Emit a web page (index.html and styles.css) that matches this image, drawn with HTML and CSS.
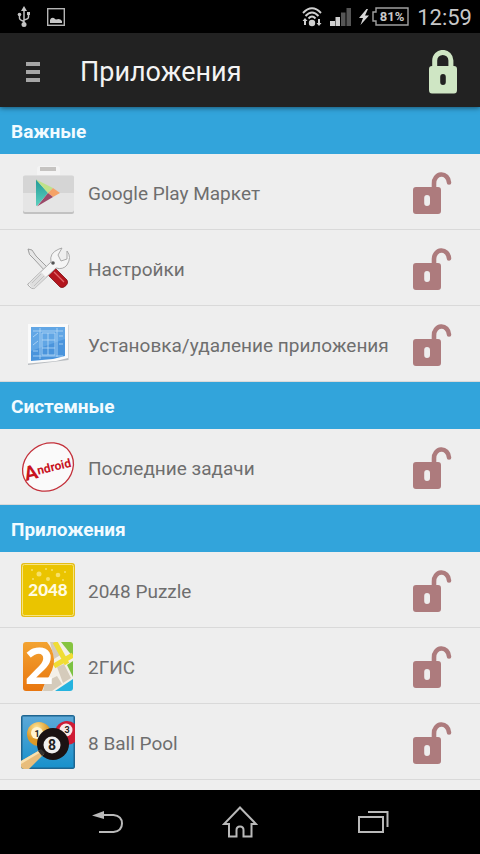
FILE: index.html
```html
<!DOCTYPE html>
<html lang="ru">
<head>
  <meta charset="UTF-8" />
  <meta name="viewport" content="width=device-width, initial-scale=1.0"/>
  <title>Приложения</title>
  <link rel="stylesheet" href="styles.css">
</head>
<body>
  <!-- Shared lock icon -->
  <svg class="sprite" aria-hidden="true">
    <symbol id="unlock" viewBox="0 0 40 44">
      <path d="M21 18V12.500A7.500 8.500 0 0 1 36 11.500" fill="none" stroke="currentColor" stroke-width="4.600" stroke-linecap="round"/>
      <path fill-rule="evenodd" fill="currentColor" d="M3 16H25Q28 16 28 19V40Q28 43 25 43H3Q0 43 0 40V19Q0 16 3 16ZM14 24Q11.200 24 11.200 27V32Q11.200 35 14 35Q17 35 17 32V27Q17 24 14 24Z"/>
    </symbol>
  </svg>

  <div class="screen">
    <div class="status-bar">
      <div class="status-group left">
        <svg width="14" height="22" viewBox="0 0 14 22" fill="none" stroke="#c4c4c4" stroke-width="1.500">
          <path d="M7 4V18M2.500 9V12Q2.500 14 7 15.500M11.500 8V11Q11.500 13 7 14"/>
          <path d="M7 0L10 5H4Z" fill="#c4c4c4" stroke="none"/>
          <circle cx="7" cy="18.500" r="2.500" fill="#c4c4c4" stroke="none"/>
          <circle cx="2.500" cy="8.500" r="1.800" fill="#c4c4c4" stroke="none"/>
          <path d="M10 6H13V9H10Z" fill="#c4c4c4" stroke="none"/>
        </svg>
        <svg width="18" height="18" viewBox="0 0 18 18">
          <rect x="0.700" y="0.700" width="16.600" height="16.600" fill="none" stroke="#b5b5b5" stroke-width="1.400"/>
          <path d="M3 15V12Q4 9 7 10Q8 11 9 11.500Q13 10 15 13V15Z" fill="#c8c8c8"/>
        </svg>
      </div>
      <div class="status-group">
        <svg class="wifi" width="20" height="20" viewBox="0 0 20 20" fill="none" stroke="#d0d0d0" stroke-width="1.900">
          <path d="M1 6Q10 -3.500 19 6M3.500 9Q10 2 16.500 9M6.500 11.500Q10 7.500 13.500 11.500"/>
          <circle cx="10" cy="16" r="3.200" fill="#d0d0d0" stroke="none"/>
          <path d="M3 11L5.500 14H4V18H2V14H0.500ZM17 19L14.500 16H16V12H18V16H19.500Z" fill="#d0d0d0" stroke="none"/>
        </svg>
        <svg class="signal" width="21" height="18" viewBox="0 0 21 18">
          <path d="M0 13H5V18H0ZM5.500 9H10V18H5.500Z" fill="#d0d0d0"/>
          <path d="M11 4.500H15.500V18H11ZM16.500 0H21V18H16.500Z" fill="#555"/>
        </svg>
        <svg class="bolt" width="10" height="16" viewBox="0 0 10 16">
          <path d="M7.500 0L0 9H4L1.500 16L10 6.500H6L9 0Z" fill="#d8d8d8"/>
        </svg>
        <svg class="battery" width="37" height="19" viewBox="0 0 37 19">
          <path d="M4 1H36V18H4V14H1V5H4Z" fill="none" stroke="#a0a0a0" stroke-width="1.400"/>
          <text x="20" y="14">81%</text>
        </svg>
        <span class="clock">12:59</span>
      </div>
    </div>

    <header class="action-bar">
      <button class="menu-button" aria-label="Меню"><span></span><span></span><span></span></button>
      <h1>Приложения</h1>
      <button class="lock-all" aria-label="Заблокировать">
        <svg width="30" height="44" viewBox="0 0 30 44">
          <path d="M6.700 18V10.500A8.100 8.100 0 0 1 22.900 10.500V18" fill="none" stroke="#cfe6c4" stroke-width="5"/>
          <path fill-rule="evenodd" fill="#cfe6c4" d="M4 16H26Q29 16 29 19V40Q29 43.500 26 43.500H4Q1 43.500 1 40V19Q1 16 4 16ZM15 24Q12.200 24 12.200 27V32Q12.200 35 15 35Q17.800 35 17.800 32V27Q17.800 24 15 24Z"/>
        </svg>
      </button>
    </header>

    <main class="app-list">
      <h2>Важные</h2>
      <ul>
        <li>
          <svg class="app-icon" viewBox="0 0 54 54">
            <defs>
              <linearGradient id="play" x1="0" y1="0" x2="0" y2="1"><stop offset="0" stop-color="#219a96"/><stop offset="1" stop-color="#5ed0bf"/></linearGradient>
            </defs>
            <path d="M16 11V4Q16 1 19 1H36Q39 1 39 4V11Z" fill="#f4f4f4"/>
            <rect x="19" y="2" width="16" height="4" fill="#c5c3c1"/>
            <rect x="2" y="12" width="51" height="37" rx="2" fill="#c2c2c2"/>
            <rect x="2" y="10.500" width="51" height="36.500" rx="2" fill="#e5e5e5"/>
            <path d="M2 28V12Q2 10.500 4 10.500H51Q53 10.500 53 12V28Z" fill="#d5d5d5"/>
            <path d="M15 14.500L27 28L16 41Q15 41 15 40Z" fill="url(#play)"/>
            <path d="M15 14.500L32 23L27 28Z" fill="#bfe18a"/>
            <path d="M32 23L39 28L32 32L27 28Z" fill="#f5a267"/>
            <path d="M27 28L32 32L16 41.500Z" fill="#9b4a69"/>
          </svg>
          <span class="app-name">Google Play Маркет</span>
          <button class="lock" aria-label="Google Play Маркет"><svg><use href="#unlock"/></svg></button>
        </li>
        <li>
          <svg class="app-icon" viewBox="0 0 54 54">
            <path d="M7 8L11 9L15 15L28 28L25 31L13 18Q7 14 7 8Z" fill="#e6e6e6" stroke="#8c8c8c" stroke-width="0.800"/>
            <path d="M27 31L33 26L46 39Q48 43 43 46Q41 47 39 46L27 34Z" fill="#b3151d" stroke="#7d1015" stroke-width="0.800"/>
            <path d="M33 31L43 41" stroke="#e2666a" stroke-width="1.200"/>
            <path d="M8 42L30 21Q28 12 38 8L41 7L37 14L40 20L46 18L46 10Q51 16 46 24Q42 29 35 27L14 47Q11 49 7 44Q6 43 8 42Z" fill="#f5f5f5" stroke="#a2a2a2" stroke-width="0.900"/>
            <path d="M8 42L20 31L25 36L14 47Q10 48 8 42Z" fill="#dedede"/>
            <path d="M11 42L20 33M13 45L23 35" stroke="#bbb" stroke-width="0.800"/>
            <circle cx="32" cy="22" r="1.800" fill="#555"/>
          </svg>
          <span class="app-name">Настройки</span>
          <button class="lock" aria-label="Настройки"><svg><use href="#unlock"/></svg></button>
        </li>
        <li>
          <svg class="app-icon" viewBox="0 0 54 54">
            <path d="M7 8H47.500V43L7 48Z" fill="#b8bcc0"/>
            <path d="M7 7H47V41L35 44L7 46.500Z" fill="#fafafa"/>
            <path d="M10 10H44V39L32 42L10 44Z" fill="#4a94dc"/>
            <path d="M10 10H44V22L10 34Z" fill="#61a6e5"/>
            <path d="M19 11V42M36 11V40M12 14H42M12 39H42M21 16H34V38H21ZM21 23H34M21 31H34M27 16V38M12 20L17 16M12 28L17 24M38 19H42M38 27H42M12 34H17" fill="none" stroke="#b7daf7" stroke-width="0.800"/>
          </svg>
          <span class="app-name">Установка/удаление приложения</span>
          <button class="lock" aria-label="Установка/удаление приложения"><svg><use href="#unlock"/></svg></button>
        </li>
      </ul>

      <h2>Системные</h2>
      <ul>
        <li>
          <svg class="app-icon" viewBox="0 0 54 54">
            <ellipse cx="27" cy="27" rx="26.500" ry="23" transform="rotate(-35 27 27)" fill="#fafafa" stroke="#c3303a" stroke-width="1.300"/>
            <text class="kitkat" x="5" y="41" transform="rotate(-14 5 41)"><tspan class="big">A</tspan><tspan dy="-3">ndroid</tspan></text>
          </svg>
          <span class="app-name">Последние задачи</span>
          <button class="lock" aria-label="Последние задачи"><svg><use href="#unlock"/></svg></button>
        </li>
      </ul>

      <h2>Приложения</h2>
      <ul>
        <li>
          <svg class="app-icon" viewBox="0 0 54 54">
            <rect width="54" height="54" rx="3" fill="#e5bd17"/>
            <rect x="1.500" y="1.500" width="51" height="51" rx="2" fill="#eac400" stroke="#f7e480" stroke-width="1"/>
            <g fill="#f7e169">
              <circle cx="18" cy="11" r="2.500"/><circle cx="37" cy="12" r="2.300"/><circle cx="27" cy="16" r="2"/>
              <circle cx="11" cy="7" r="1"/><circle cx="25" cy="6" r="1"/><circle cx="31" cy="7" r="1"/><circle cx="44" cy="9" r="1"/><circle cx="42" cy="17" r="1"/><circle cx="12" cy="16" r="1"/>
            </g>
            <text class="puzzle" x="27" y="33">2048</text>
          </svg>
          <span class="app-name">2048 Puzzle</span>
          <button class="lock" aria-label="2048 Puzzle"><svg><use href="#unlock"/></svg></button>
        </li>
        <li>
          <svg class="app-icon" viewBox="0 0 54 54">
            <defs>
              <clipPath id="tile"><rect x="2" y="3" width="50" height="49" rx="3"/></clipPath>
              <linearGradient id="orange" x1="0" y1="0" x2="0" y2="1"><stop offset="0" stop-color="#f3a331"/><stop offset="1" stop-color="#e8760f"/></linearGradient>
            </defs>
            <g clip-path="url(#tile)">
              <rect x="2" y="3" width="50" height="49" fill="#f4f0e8"/>
              <path d="M40 3H52V18Z" fill="#86c440"/>
              <path d="M46 26L52 22V38Z" fill="#7cc242"/>
              <path d="M29 3H36L41 15L33 20ZM36 28L43 25L50 39L42 44ZM24 43L36 37L41 45L31 52H22Z" fill="#d5cbbb"/>
              <path d="M34 3L46 25M33 27L52 16" stroke="#f0dd35" stroke-width="5"/>
              <path d="M34 52L52 40V52Z" fill="#25b3df"/>
              <path d="M2 3H26Q32 10 33 20Q34 29 24 44L21 52H2Z" fill="url(#orange)"/>
            </g>
            <text class="gis" x="18" y="45">2</text>
          </svg>
          <span class="app-name">2ГИС</span>
          <button class="lock" aria-label="2ГИС"><svg><use href="#unlock"/></svg></button>
        </li>
        <li>
          <svg class="app-icon" viewBox="0 0 54 54">
            <defs>
              <clipPath id="pool"><rect width="54" height="54" rx="3"/></clipPath>
              <linearGradient id="felt" x1="0" y1="0" x2="0" y2="1"><stop offset="0" stop-color="#5ea9d8"/><stop offset="1" stop-color="#1690cb"/></linearGradient>
              <radialGradient id="yellow" cx="0.400" cy="0.250"><stop offset="0" stop-color="#ffe79a"/><stop offset="1" stop-color="#dc9827"/></radialGradient>
            </defs>
            <g clip-path="url(#pool)">
              <rect width="54" height="54" fill="url(#felt)"/>
              <path d="M0 0H54V54H0Z" fill="none" stroke="#1f6590" stroke-width="3"/>
              <circle cx="18" cy="19" r="12" fill="url(#yellow)"/>
              <circle cx="46" cy="18" r="12" fill="#cf1c35"/>
              <circle cx="16" cy="18" r="6" fill="#fff4d2"/>
              <circle cx="45" cy="15" r="6.500" fill="#f8e9e9"/>
              <circle cx="32" cy="29" r="16" fill="#1b1213"/>
              <circle cx="31" cy="30" r="8.500" fill="#f1efef"/>
              <path d="M0 46L19 35L23 39L8 54H0Z" fill="#e8bd7b"/>
              <path d="M0 46L19 35L20 37L0 49Z" fill="#f9e1b0"/>
              <path d="M17 36L20 34L24 38L21 41Z" fill="#33302f"/>
            </g>
            <text class="ball" x="16" y="22">1</text>
            <text class="ball" x="46" y="18">3</text>
            <text class="ball eight" x="31" y="35">8</text>
          </svg>
          <span class="app-name">8 Ball Pool</span>
          <button class="lock" aria-label="8 Ball Pool"><svg><use href="#unlock"/></svg></button>
        </li>
      </ul>
    </main>

    <nav class="nav-bar">
      <button aria-label="Назад">
        <svg width="32" height="32" viewBox="0 0 32 32" fill="none" stroke="#b9b9b9" stroke-width="2">
          <path d="M12 9H22.500Q31 10 31 17.500Q31 25 22.500 26H8"/>
          <path d="M1 9.500L13 5V13Z" fill="#b9b9b9" stroke="none"/>
        </svg>
      </button>
      <button aria-label="Домой">
        <svg width="36" height="32" viewBox="0 0 36 32" fill="none" stroke="#b9b9b9" stroke-width="2">
          <path d="M18 1.500L34 18H29.500V30.500H21.500V24Q21.500 20.500 18 20.500Q14.500 20.500 14.500 24V30.500H7V18H2Z"/>
        </svg>
      </button>
      <button aria-label="Последние">
        <svg width="32" height="32" viewBox="0 0 32 32" fill="none" stroke="#b9b9b9" stroke-width="2">
          <rect x="2" y="11" width="24" height="15"/>
          <path d="M11 6H30.500V21"/>
        </svg>
      </button>
    </nav>
  </div>
</body>
</html>
```
FILE: styles.css
```css
* {
  margin: 0;
  padding: 0;
  box-sizing: border-box;
}

body {
  font-family: Roboto, "Noto Sans", sans-serif;
  background: #000;
}

button {
  border: none;
  background: none;
  cursor: pointer;
}

svg {
  display: block;
  flex-shrink: 0;
}

.sprite {
  display: none;
}

.screen {
  display: flex;
  flex-direction: column;
  height: 100vh;
}

/* Status bar */
.status-bar {
  display: flex;
  justify-content: space-between;
  align-items: center;
  flex-shrink: 0;
  height: 33px;
  padding: 0 8px 0 17px;
  color: #c8c8c8;
}

.status-group {
  display: flex;
  align-items: center;
}

.status-group.left {
  gap: 16px;
}

.signal {
  margin-left: 8px;
}

.bolt {
  margin: 0 3px 0 8px;
}

.battery text {
  fill: #c8c8c8;
  font-size: 13px;
  font-weight: 700;
  text-anchor: middle;
}

.clock {
  margin-left: 8px;
  padding-top: 2px;
  font-size: 22px;
}

/* Action bar */
.action-bar {
  position: relative;
  display: flex;
  align-items: center;
  flex-shrink: 0;
  height: 74px;
  padding: 3px 22px 0 26px;
  background: #222;
  box-shadow: 0 1px 5px rgba(0,0,0,0.5);
}

.menu-button {
  display: flex;
  flex-direction: column;
  gap: 4px;
  width: 14px;
}

.menu-button span {
  height: 4px;
  background: #a6a6a6;
}

.action-bar h1 {
  flex: 1;
  padding-left: 40px;
  color: #f3f3f3;
  font-size: 27px;
  font-weight: 400;
}

/* App list */
.app-list {
  flex: 1;
  min-height: 0;
  overflow: hidden;
  background: #eee;
}

.app-list h2 {
  height: 47px;
  padding: 2px 11px 0;
  background: #32a4db;
  color: #f2fbff;
  font-size: 19px;
  font-weight: 700;
  line-height: 45px;
}

.app-list ul {
  list-style: none;
}

.app-list li {
  display: flex;
  align-items: center;
  height: 76px;
  padding: 0 27px 0 21px;
  border-bottom: 1px solid #d9d9d9;
}

.app-icon {
  width: 54px;
  height: 54px;
  overflow: visible;
}

.app-name {
  flex: 1;
  padding: 3px 0 0 13px;
  color: #6e6e6e;
  font-size: 19px;
}

.lock {
  padding-top: 2px;
  color: #ad7b7d;
}

.lock svg {
  width: 40px;
  height: 44px;
}

/* Lettering in the app icons */
.kitkat {
  fill: #c8141f;
  font-size: 12px;
  font-weight: 700;
}

.kitkat .big {
  font-size: 20px;
}

.puzzle {
  fill: #fffbe0;
  font-family: Lato, sans-serif;
  font-size: 17px;
  font-weight: 900;
  text-anchor: middle;
}

.gis {
  fill: #fff;
  font-family: "Open Sans", sans-serif;
  font-size: 50px;
  font-weight: 700;
  text-anchor: middle;
}

.ball {
  fill: #222;
  font-size: 9px;
  font-weight: 700;
  text-anchor: middle;
}

.eight {
  font-size: 14px;
}

/* Navigation bar */
.nav-bar {
  display: grid;
  grid-template-columns: repeat(3, 1fr);
  flex-shrink: 0;
  height: 64px;
  padding: 0 40px;
}

.nav-bar button {
  display: flex;
  justify-content: center;
  align-items: center;
}
```
